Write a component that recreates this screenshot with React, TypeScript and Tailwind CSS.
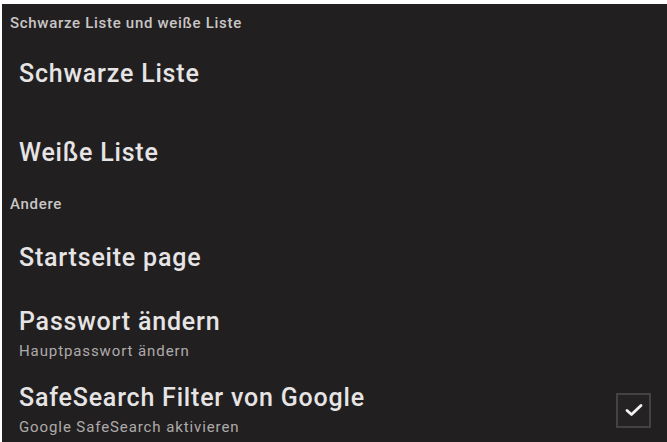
export default function App() {
  return (
    <div className="h-[442px] w-[667px] overflow-hidden bg-white pt-[4px] pl-[2px]" style={{ fontFamily: "Roboto, 'Noto Sans', sans-serif" }}>
      <div className="flex h-full flex-col bg-[#221f20]">
        <SectionHeader label="Schwarze Liste und weiße Liste" className="mt-[10px]" />
        <Item title="Schwarze Liste" className="mt-[28px]" />
        <Item title="Weiße Liste" className="mt-[51px]" />
        <SectionHeader label="Andere" className="mt-[28px]" />
        <Item title="Startseite page" className="mt-[31px]" />
        <Item title="Passwort ändern" subtitle="Hauptpasswort ändern" className="mt-[36px]" />
        <div className="mt-[24px] flex items-center pr-[16px]">
          <Item title="SafeSearch Filter von Google" subtitle="Google SafeSearch aktivieren" className="flex-1" />
          <div className="flex h-[35px] w-[35px] items-center justify-center border-2 border-[#454243] bg-[#252223]">
            <svg width="18" height="14" viewBox="0 0 18 14" fill="none">
              <path d="M2 7.5l4.5 4L16 2.5" stroke="#f2f2f2" strokeWidth="2.8" strokeLinecap="round" strokeLinejoin="round" />
            </svg>
          </div>
        </div>
      </div>
    </div>
  );
}

function SectionHeader({ label, className }: { label: string; className: string }) {
  return (
    <div className={`pl-[8px] text-[15px] font-medium leading-[18px] tracking-[0.7px] text-[#c9c6c6] ${className}`}>{label}</div>
  );
}

function Item({ title, subtitle, className }: { title: string; subtitle?: string; className: string }) {
  return (
    <div className={`flex flex-col pl-[17px] ${className}`}>
      <div className="text-[25px] font-medium leading-[28px] tracking-[0.8px] text-[#e6e4e4]">{title}</div>
      {subtitle && (
        <div className="mt-[6px] text-[15px] leading-[18px] tracking-[0.9px] text-[#aeabab]">{subtitle}</div>
      )}
    </div>
  );
}
